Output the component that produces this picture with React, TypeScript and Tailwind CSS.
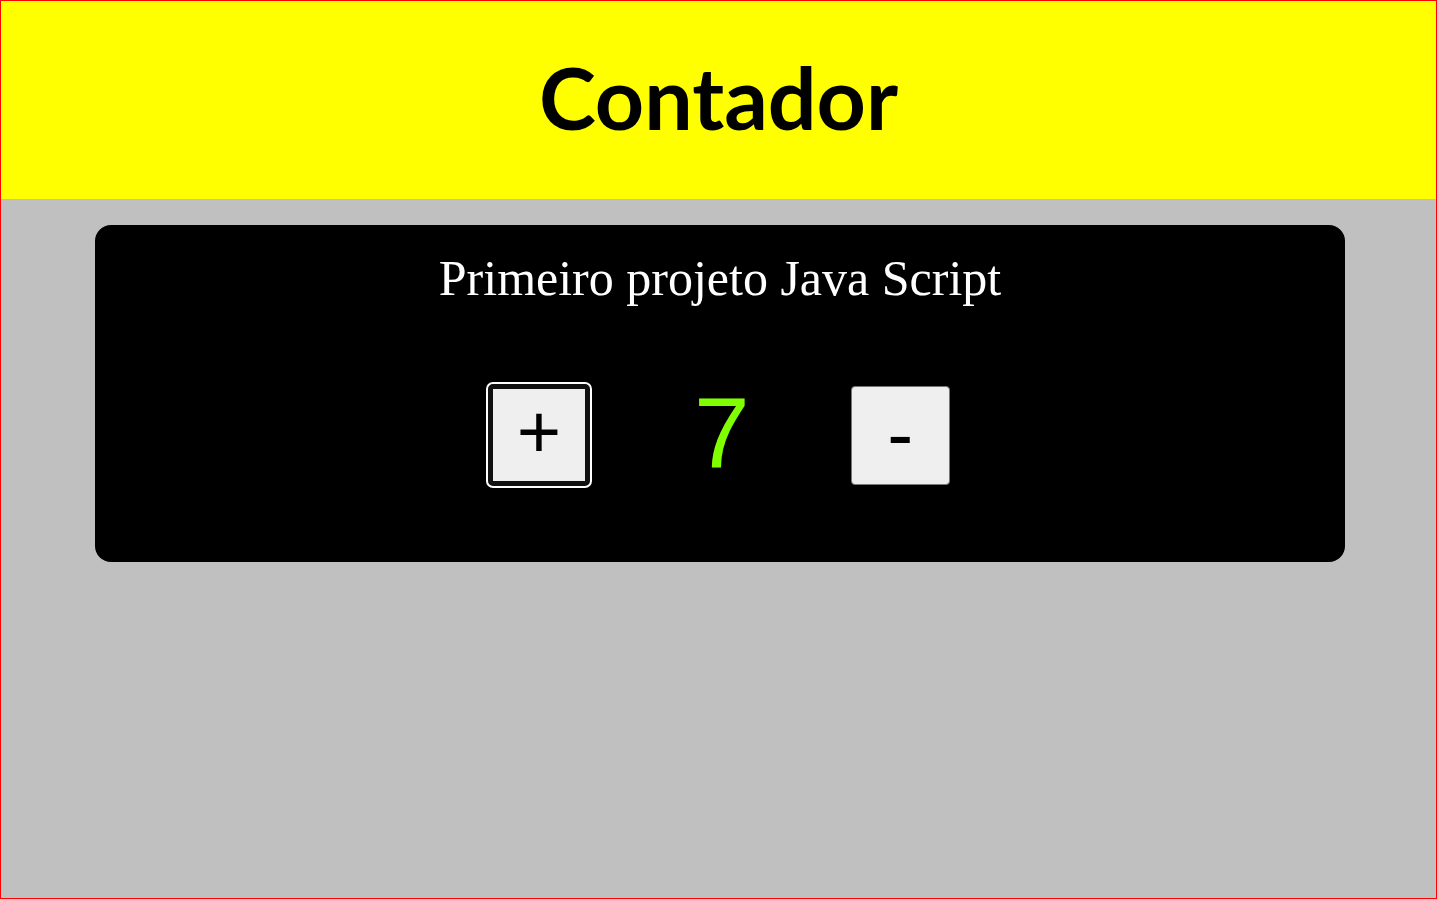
export default function App() {
  const count = 7

  return (
    <div className="h-[899px] border border-[#ff0000] bg-[#c0c0c0]">
      {/* Header */}
      <header className="h-[198px] bg-[#ffff00] flex items-center justify-center">
        <h1 className="text-[86px] leading-none font-bold text-black font-['Lato',sans-serif] pb-[6px]">
          Contador
        </h1>
      </header>

      {/* Card */}
      <main className="ml-[94px] mt-[26px] w-[1250px] rounded-[16px] bg-black pt-[28px] pb-[74px]">
        <p className="text-center text-[50px] leading-none text-white font-['Liberation_Serif',serif]">
          Primeiro projeto Java Script
        </p>

        <div className="mt-[79px] h-[106px] pl-[393px] flex items-center">
          <button className="w-[102px] h-[102px] rounded-[5px] border-[5px] border-[#111] bg-[#efefef] outline-2 outline-white flex items-center justify-center text-[76px] leading-none text-black font-['Liberation_Sans',sans-serif]">
            <span className="-mt-[6px]">+</span>
          </button>
          <span className="ml-[104px] -mt-[4px] text-[100px] leading-none text-[#7fff00] font-['Liberation_Sans',sans-serif]">
            {count}
          </span>
          <button className="ml-[101px] w-[99px] h-[99px] rounded-[4px] border border-[#767676] bg-[#efefef] flex items-center justify-center text-[78px] leading-none text-black font-['Liberation_Sans',sans-serif]">
            <span className="-mt-[2px]">-</span>
          </button>
        </div>
      </main>
    </div>
  )
}
